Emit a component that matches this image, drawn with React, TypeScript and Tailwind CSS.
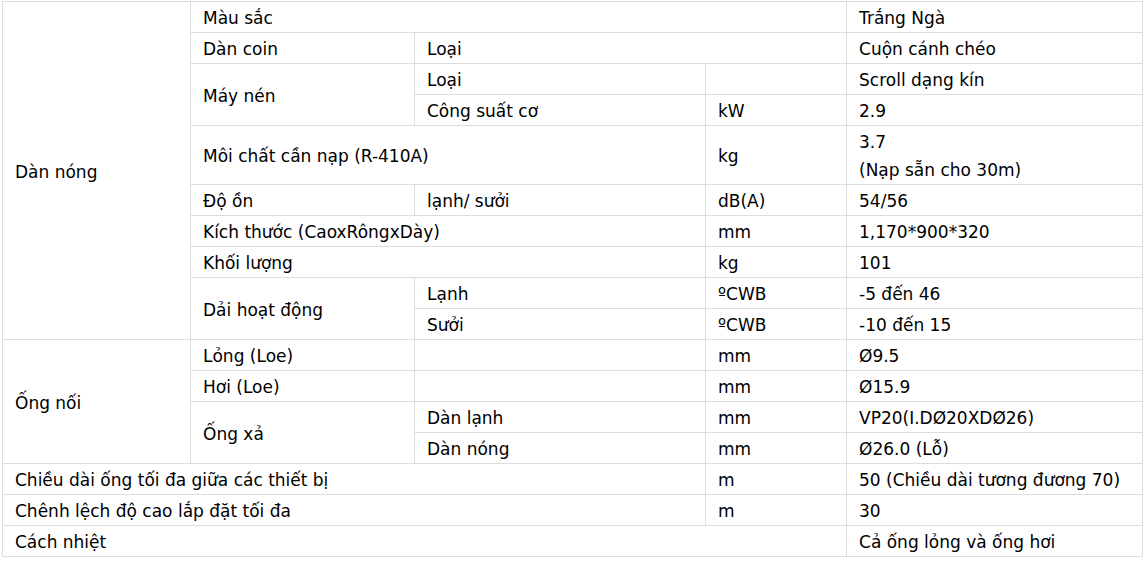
const cell = "border border-[#dddddd] px-3 pt-[2px] pb-0 align-middle";

type C = { t: string; cs?: number; rs?: number };

const rows: C[][] = [
	[{ t: "Dàn nóng", rs: 10 }, { t: "Màu sắc", cs: 3 }, { t: "Trắng Ngà" }],
	[{ t: "Dàn coin" }, { t: "Loại", cs: 2 }, { t: "Cuộn cánh chéo" }],
	[{ t: "Máy nén", rs: 2 }, { t: "Loại" }, { t: "" }, { t: "Scroll dạng kín" }],
	[{ t: "Công suất cơ" }, { t: "kW" }, { t: "2.9" }],
	[{ t: "Môi chất cần nạp (R-410A)", cs: 2 }, { t: "kg" }, { t: "3.7\n(Nạp sẵn cho 30m)" }],
	[{ t: "Độ ồn" }, { t: "lạnh/ sưởi" }, { t: "dB(A)" }, { t: "54/56" }],
	[{ t: "Kích thước (CaoxRôngxDày)", cs: 2 }, { t: "mm" }, { t: "1,170*900*320" }],
	[{ t: "Khối lượng", cs: 2 }, { t: "kg" }, { t: "101" }],
	[{ t: "Dải hoạt động", rs: 2 }, { t: "Lạnh" }, { t: "ºCWB" }, { t: "-5 đến 46" }],
	[{ t: "Sưởi" }, { t: "ºCWB" }, { t: "-10 đến 15" }],
	[{ t: "Ống nối", rs: 4 }, { t: "Lỏng (Loe)" }, { t: "" }, { t: "mm" }, { t: "Ø9.5" }],
	[{ t: "Hơi (Loe)" }, { t: "" }, { t: "mm" }, { t: "Ø15.9" }],
	[{ t: "Ống xả", rs: 2 }, { t: "Dàn lạnh" }, { t: "mm" }, { t: "VP20(I.DØ20XDØ26)" }],
	[{ t: "Dàn nóng" }, { t: "mm" }, { t: "Ø26.0 (Lỗ)" }],
	[{ t: "Chiều dài ống tối đa giữa các thiết bị", cs: 3 }, { t: "m" }, { t: "50 (Chiều dài tương đương 70)" }],
	[{ t: "Chênh lệch độ cao lắp đặt tối đa", cs: 3 }, { t: "m" }, { t: "30" }],
	[{ t: "Cách nhiệt", cs: 4 }, { t: "Cả ống lỏng và ống hơi" }],
];

export default function App() {
	return (
		<div className="min-h-[562px] bg-white pl-[2px] pt-px font-['DejaVu_Sans',sans-serif] text-[17px] leading-[28px] text-black">
			<table className="w-[1140px] table-fixed border-collapse">
				<colgroup>
					<col className="w-[188px]" />
					<col className="w-[224px]" />
					<col className="w-[291px]" />
					<col className="w-[141px]" />
					<col className="w-[296px]" />
				</colgroup>
				<tbody>
					{rows.map((r, i) => (
						<tr key={i}>
							{r.map((c, j) => (
								<td key={j} colSpan={c.cs} rowSpan={c.rs} className={cell}>
									{c.t.split("\n").map((line, k) => (
										<div key={k} className="whitespace-nowrap">
											{line || "\u00a0"}
										</div>
									))}
								</td>
							))}
						</tr>
					))}
				</tbody>
			</table>
		</div>
	);
}
